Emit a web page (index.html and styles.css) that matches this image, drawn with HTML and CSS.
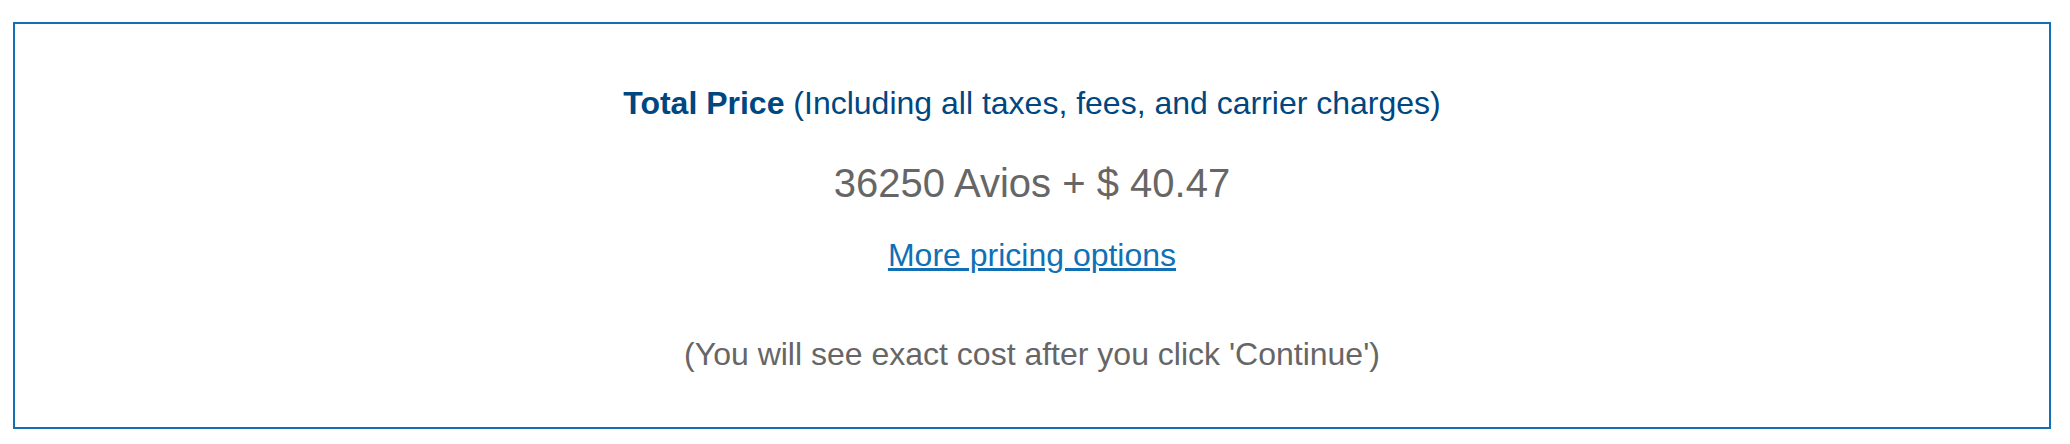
FILE: index.html
```html
<!DOCTYPE html>
<html lang="en">
<head>
<meta charset="utf-8">
<title>Total Price</title>
<link rel="stylesheet" href="styles.css">
</head>
<body>
<section class="price-box">
  <p class="price-title"><strong>Total Price</strong> (Including all taxes, fees, and carrier charges)</p>
  <p class="price-amount">36250 Avios + $ 40.47</p>
  <p class="price-more"><a href="#">More pricing options</a></p>
  <p class="price-note">(You will see exact cost after you click 'Continue')</p>
</section>
</body>
</html>
```
FILE: styles.css
```css
html, body {
  margin: 0;
  padding: 0;
  background: #ffffff;
}

body {
  font-family: "Liberation Sans", Arial, Helvetica, sans-serif;
  padding: 22px 19px 0 13px;
}

.price-box {
  border: 2px solid #1170b5;
  box-sizing: border-box;
  height: 407px;
  padding-top: 61px;
  display: flex;
  flex-direction: column;
  align-items: center;
  text-align: center;
}

.price-box p {
  margin: 0;
}

.price-title {
  font-size: 32px;
  line-height: 36px;
  color: #00467f;
}

.price-title strong {
  font-weight: bold;
}

.price-box .price-amount {
  margin-top: 39px;
  font-size: 40px;
  line-height: 46px;
  color: #666666;
}

.price-box .price-more {
  margin-top: 31px;
  font-size: 32px;
  line-height: 36px;
}

.price-more a {
  color: #1170b5;
  text-decoration: underline;
}

.price-box .price-note {
  margin-top: 63px;
  font-size: 32px;
  line-height: 36px;
  color: #666666;
}
```
